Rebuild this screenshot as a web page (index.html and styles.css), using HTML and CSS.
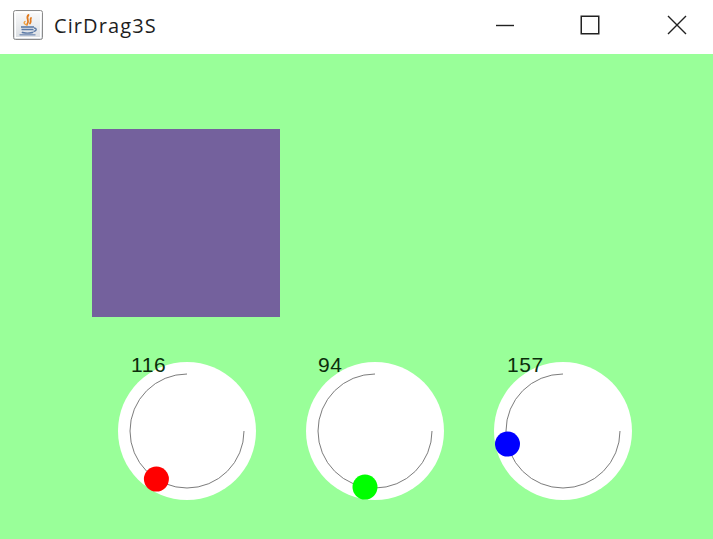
FILE: index.html
```html
<!DOCTYPE html>
<html lang="en">
<head>
<meta charset="utf-8">
<title>CirDrag3S</title>
<link rel="stylesheet" href="styles.css">
</head>
<body>
<div class="window">
  <header class="titlebar">
    <div class="title-left">
      <svg class="app-icon" width="30" height="30" viewBox="0 0 30 30">
        <defs>
          <linearGradient id="ig" x1="0" y1="0" x2="0" y2="1">
            <stop offset="0" stop-color="#fbfbfb"/>
            <stop offset="1" stop-color="#d9dde2"/>
          </linearGradient>
        </defs>
        <rect x="0.5" y="0.5" width="29" height="29" rx="2" fill="url(#ig)" stroke="#8b8b8b"/>
        <rect x="2.5" y="2.5" width="25" height="25" fill="none" stroke="#ffffff" stroke-width="1"/>
        <path d="M15.5 5 C12 8.5 17.5 10 14 14.5 M18 8 C16.5 10 19 11 17 13.5" fill="none" stroke="#e07a1e" stroke-width="1.8" stroke-linecap="round"/>
        <path d="M12 11.5 C10 13 12 14.5 14 15" fill="none" stroke="#f0a040" stroke-width="1.4" stroke-linecap="round"/>
        <path d="M8 17 H21" stroke="#5b7aa6" stroke-width="1.6"/>
        <path d="M8.5 19.5 H20.5 M21 18 C24 18 24 21 20.5 21.5" fill="none" stroke="#5b7aa6" stroke-width="1.4"/>
        <path d="M9 22 C10 23.5 19 23.5 20 22" fill="none" stroke="#5b7aa6" stroke-width="1.4"/>
        <path d="M6.5 24.8 H22.5" stroke="#7d95b8" stroke-width="1.4"/>
      </svg>
      <span class="title-text">CirDrag3S</span>
    </div>
    <div class="controls">
      <div class="ctrl ctrl-min">
        <svg width="20" height="20" viewBox="0 0 20 20"><path d="M1 10.5 H19" stroke="#222" stroke-width="1.4"/></svg>
      </div>
      <div class="ctrl ctrl-max">
        <svg width="20" height="20" viewBox="0 0 20 20"><rect x="1.25" y="1.25" width="17.5" height="17.5" fill="none" stroke="#222" stroke-width="1.5"/></svg>
      </div>
      <div class="ctrl ctrl-close">
        <svg width="20" height="20" viewBox="0 0 20 20"><path d="M1 1 L19 19 M19 1 L1 19" stroke="#222" stroke-width="1.4"/></svg>
      </div>
    </div>
  </header>

  <main class="canvas">
    <div class="swatch"></div>
    <div class="dials">
      <svg class="dial" width="150" height="150" viewBox="0 0 150 150">
        <circle class="dial-face" cx="75" cy="80" r="69"/>
        <path class="dial-track" d="M75 23 A57 57 0 1 0 132 80"/>
        <circle cx="44.4" cy="128.1" r="12.5" fill="#ff0000"/>
        <text class="dial-value" x="19" y="21">116</text>
      </svg>
      <svg class="dial" width="150" height="150" viewBox="0 0 150 150">
        <circle class="dial-face" cx="75" cy="80" r="69"/>
        <path class="dial-track" d="M75 23 A57 57 0 1 0 132 80"/>
        <circle cx="65" cy="136.1" r="12.5" fill="#00ff00"/>
        <text class="dial-value" x="18" y="21">94</text>
      </svg>
      <svg class="dial" width="150" height="150" viewBox="0 0 150 150">
        <circle class="dial-face" cx="75" cy="80" r="69"/>
        <path class="dial-track" d="M75 23 A57 57 0 1 0 132 80"/>
        <circle cx="19.5" cy="93.1" r="12.5" fill="#0000ff"/>
        <text class="dial-value" x="19" y="21">157</text>
      </svg>
    </div>
  </main>
</div>
</body>
</html>
```

FILE: styles.css
```css
* { box-sizing: border-box; }

html, body {
  margin: 0;
  padding: 0;
  width: 713px;
  height: 539px;
  overflow: hidden;
  background: #99ff99;
}

.window {
  width: 713px;
  height: 539px;
  display: flex;
  flex-direction: column;
}

.titlebar {
  height: 54px;
  flex: none;
  background: #ffffff;
  display: flex;
  align-items: center;
  justify-content: space-between;
  padding: 0 26px 4px 13px;
}

.title-left {
  display: flex;
  align-items: center;
  gap: 11px;
}

.app-icon { display: block; }

.title-text {
  font-family: "Open Sans", "Noto Sans", sans-serif;
  font-size: 20px;
  color: #1e1e1e;
  letter-spacing: 1.1px;
  line-height: 1;
  padding-top: 2px;
}

.controls {
  display: flex;
  align-items: center;
}

.ctrl {
  width: 20px;
  height: 20px;
  display: flex;
}

.ctrl-min { margin-right: 65px; }
.ctrl-max { margin-right: 67px; }

.canvas {
  flex: 1;
  background: #99ff99;
  padding: 75px 0 0 92px;
}

.swatch {
  width: 188px;
  height: 188px;
  background: #74619d;
}

.dials {
  display: flex;
  gap: 38px;
  margin: 34px 0 0 20px;
}

.dial { display: block; overflow: visible; }

.dial-face { fill: #ffffff; }

.dial-track {
  fill: none;
  stroke: #7c7c7c;
  stroke-width: 1;
}

.dial-value {
  font-family: "Liberation Sans", Arial, sans-serif;
  font-size: 21px;
  letter-spacing: 0.6px;
  fill: #0b2e0b;
}
```
